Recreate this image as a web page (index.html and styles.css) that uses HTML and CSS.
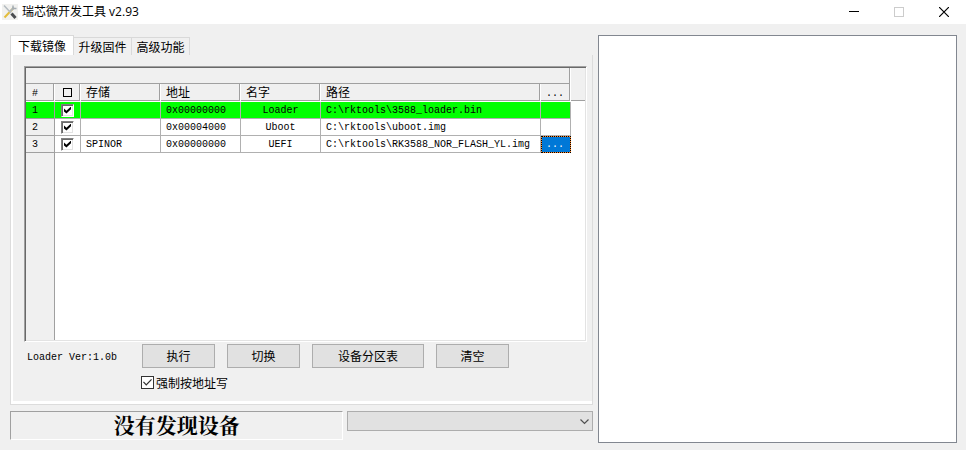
FILE: index.html
```html
<!DOCTYPE html>
<html lang="zh-CN">
<head>
    <meta charset="UTF-8">
    <meta name="viewport" content="width=device-width, initial-scale=1.0">
    <title>瑞芯微开发工具 v2.93</title>
    <link rel="stylesheet" href="styles.css">
</head>
<body>
    <header class="titlebar">
        <svg class="app-icon" width="16" height="16" viewBox="0 0 16 16">
            <rect width="16" height="16" fill="#f1f1ef"/>
            <path d="M2.5 13.500L11.500 4" stroke="#e3bd3c" stroke-width="2"/>
            <path d="M8 7.500L12 3.500" stroke="#aeb5ba" stroke-width="2"/>
            <path d="M11 1.500L11 4.500L14.500 4.500" fill="none" stroke="#a5adb3" stroke-width="1.500"/>
            <path d="M2 1.500L9 9" stroke="#b4bbc0" stroke-width="1.500"/>
            <path d="M9.500 9.500L13.500 14" stroke="#4b4d50" stroke-width="3"/>
        </svg>
        <h1>瑞芯微开发工具 v2.93</h1>
        <div class="window-buttons">
            <button type="button" aria-label="最小化"><svg width="10" height="10"><path d="M0 4.500H10" stroke="#000"/></svg></button>
            <button type="button" aria-label="最大化" disabled><svg width="10" height="10"><rect x="0.500" y="0.500" width="9" height="9" fill="none" stroke="#ccc"/></svg></button>
            <button type="button" aria-label="关闭"><svg width="10" height="10"><path d="M0 0L10 10M10 0L0 10" stroke="#000" stroke-width="1.200"/></svg></button>
        </div>
    </header>

    <main class="content">
        <section class="left">
            <div class="tabs" role="tablist">
                <button type="button" class="tab active" role="tab" aria-selected="true">下载镜像</button>
                <button type="button" class="tab" role="tab" aria-selected="false">升级固件</button>
                <button type="button" class="tab" role="tab" aria-selected="false">高级功能</button>
            </div>

            <div class="panel">
                <div class="grid-box">
                    <table class="grid">
                        <colgroup>
                            <col class="col-num">
                            <col class="col-check">
                            <col class="col-text">
                            <col class="col-text">
                            <col class="col-text">
                            <col class="col-path">
                            <col class="col-more">
                        </colgroup>
                        <thead>
                            <tr class="band"><th colspan="7"></th></tr>
                            <tr>
                                <th class="small">#</th>
                                <th class="center"><span class="square"></span></th>
                                <th>存储</th>
                                <th>地址</th>
                                <th>名字</th>
                                <th>路径</th>
                                <th class="small">...</th>
                            </tr>
                        </thead>
                        <tbody>
                            <tr class="done">
                                <td class="num">1</td>
                                <td class="center"><input type="checkbox" class="cell-check" aria-label="Loader" checked></td>
                                <td></td>
                                <td>0x00000000</td>
                                <td class="center">Loader</td>
                                <td>C:\rktools\3588_loader.bin</td>
                                <td></td>
                            </tr>
                            <tr>
                                <td class="num">2</td>
                                <td class="center"><input type="checkbox" class="cell-check" aria-label="Uboot" checked></td>
                                <td></td>
                                <td>0x00004000</td>
                                <td class="center">Uboot</td>
                                <td>C:\rktools\uboot.img</td>
                                <td></td>
                            </tr>
                            <tr>
                                <td class="num">3</td>
                                <td class="center"><input type="checkbox" class="cell-check" aria-label="UEFI" checked></td>
                                <td>SPINOR</td>
                                <td>0x00000000</td>
                                <td class="center">UEFI</td>
                                <td>C:\rktools\RK3588_NOR_FLASH_YL.img</td>
                                <td class="selected">...</td>
                            </tr>
                        </tbody>
                    </table>
                </div>

                <div class="actions">
                    <span class="version">Loader Ver:1.0b</span>
                    <button type="button" class="btn">执行</button>
                    <button type="button" class="btn">切换</button>
                    <button type="button" class="btn wide">设备分区表</button>
                    <button type="button" class="btn">清空</button>
                </div>
                <div class="option">
                    <input type="checkbox" id="force" class="check" checked>
                    <label for="force">强制按地址写</label>
                </div>
            </div>

            <div class="footer">
                <div class="status">没有发现设备</div>
                <div class="device">
                    <select aria-label="设备"><option></option></select>
                    <svg class="chevron" width="9" height="6" viewBox="0 0 9 6"><path d="M0.500 0.500L4.500 4.500L8.500 0.500" fill="none" stroke="#505050" stroke-width="1.200"/></svg>
                </div>
            </div>
        </section>

        <textarea class="log" aria-label="日志" readonly></textarea>
    </main>
</body>
</html>
```
FILE: styles.css
```css
* {
    margin: 0;
    padding: 0;
    box-sizing: border-box;
}

body {
    display: flex;
    flex-direction: column;
    height: 100vh;
    background: #f0f0f0;
    color: #000;
    font-family: "Liberation Mono", "Noto Sans CJK SC", monospace;
    font-size: 10px;
}

button {
    border: none;
    background: none;
    color: #000;
}

button,
label {
    font-family: "Noto Sans CJK SC", sans-serif;
    font-size: 12px;
    line-height: 16px;
}

/* title bar */
.titlebar {
    display: flex;
    align-items: center;
    height: 24px;
    padding-left: 2px;
    background: #fff;
}

.titlebar h1 {
    flex: 1;
    margin-left: 4px;
    font-family: "Open Sans", "Noto Sans CJK SC", sans-serif;
    font-size: 12px;
    font-weight: normal;
    line-height: 20px;
}

.window-buttons {
    display: flex;
}

.window-buttons button {
    display: flex;
    align-items: center;
    justify-content: center;
    width: 45px;
    height: 22px;
}

.content {
    flex: 1;
    min-height: 0;
    display: grid;
    grid-template-columns: 583fr 359fr;
    gap: 5px;
    padding: 11px 9px 7px 10px;
}

.left {
    display: flex;
    flex-direction: column;
    min-width: 0;
    padding-bottom: 3px;
}

/* tabs */
.tabs {
    display: flex;
    align-items: flex-end;
    height: 20px;
}

.tab {
    width: 58px;
    height: 18px;
    border: 1px solid #d9d9d9;
    border-width: 1px 1px 0 0;
    white-space: nowrap;
}

.tab.active {
    width: 64px;
    height: 20px;
    border-left-width: 1px;
    background: #fff;
}

.panel {
    flex: 1;
    display: flex;
    flex-direction: column;
    padding: 11px 5px 14px 11px;
    border: 1px solid #dcdcdc;
    border-top: none;
    box-shadow: inset 2px -3px #fff;
}

/* image list */
.grid-box {
    flex: 1;
    margin-left: 2px;
    border: 1px solid;
    border-color: #a0a0a0 #fff #fff #a0a0a0;
    box-shadow: inset 1px 1px #696969, inset -1px -1px #e3e3e3;
    padding: 1px;
    background:
        linear-gradient(#f0f0f0 32px, #a0a0a0 32px) top / 100% 33px content-box no-repeat,
        linear-gradient(90deg, #f0f0f0 28px, #a0a0a0 28px) left / 29px 100% content-box no-repeat,
        #fff;
}

.grid {
    width: 545px;
    table-layout: fixed;
    border-spacing: 0;
    line-height: 14px;
}

.col-num {
    width: 29px;
}

.col-check {
    width: 26px;
}

.col-text {
    width: 80px;
}

.col-path {
    width: 220px;
}

.col-more {
    width: 30px;
}

.grid th,
.grid td {
    padding: 2px 5px 0;
    text-align: left;
    white-space: nowrap;
}

.grid th {
    height: 18px;
    padding-top: 3px;
    border-right: 1px solid #fff;
    border-bottom: 1px solid #fff;
    background: #f0f0f0;
    box-shadow: inset -1px -1px #a0a0a0;
    font-weight: normal;
    font-size: 12px;
}

.grid .small {
    font-size: 10px;
}

.grid .band th {
    height: 16px;
    border-bottom: none;
}

.grid td {
    height: 17px;
    border-right: 1px solid #b0b0b0;
    border-bottom: 1px solid #b0b0b0;
    background: #fff;
}

.grid .num,
.grid th:first-child {
    padding-left: 6px;
}

.grid .num {
    border-color: #a0a0a0;
    background: #f0f0f0;
}

.grid .done td {
    background: #0f0;
}

.grid .center {
    padding-left: 0;
    padding-right: 0;
    text-align: center;
}

.grid th.center,
.grid td:has(.cell-check) {
    padding-top: 0;
}

.grid .selected {
    border-color: #ff8728;
    background: #0078d7;
    box-shadow: inset 1px 1px #ff8728;
    color: #fff;
    outline: 1px dotted #000;
    outline-offset: -1px;
}

.square {
    display: block;
    width: 9px;
    height: 9px;
    margin: 0 auto;
    border: 1px solid #000;
}

.cell-check,
.check {
    appearance: none;
    display: block;
    width: 13px;
    height: 13px;
    background: #fff;
}

.cell-check {
    margin: 0 auto;
    padding: 2px;
    border: 1px solid;
    border-color: #808080 #fff #fff #808080;
    box-shadow: inset 1px 1px #696969, inset -1px -1px #e3e3e3;
}

.cell-check:checked::before,
.check:checked::before {
    content: "";
    display: block;
    height: 100%;
    background: #000;
    clip-path: polygon(0 30%, 35% 60%, 100% 0, 100% 40%, 35% 100%, 0 70%);
}

.check {
    padding: 1px;
    border: 1px solid #333;
}

.check:checked::before {
    background: #333;
    clip-path: polygon(0 47%, 10% 38%, 36% 66%, 90% 10%, 100% 20%, 36% 85%);
}

/* buttons under the list */
.actions {
    display: flex;
    gap: 12px;
    margin-top: 2px;
}

.version {
    width: 108px;
    padding-left: 5px;
    line-height: 28px;
}

.btn {
    width: 73px;
    height: 24px;
    border: 1px solid #adadad;
    background: #e1e1e1;
}

.btn.wide {
    width: 112px;
}

.option {
    display: flex;
    align-items: center;
    gap: 2px;
    margin: 3px 0 0 119px;
}

.option label {
    line-height: 15px;
}

/* bottom row */
.footer {
    display: flex;
    align-items: flex-start;
    gap: 4px;
    margin-top: 6px;
}

.status {
    flex: 333 0 0;
    height: 29px;
    border: 1px solid;
    border-color: #a0a0a0 #fff #fff #a0a0a0;
    font-family: "Noto Serif CJK SC", "Noto Sans CJK SC", serif;
    font-size: 21px;
    font-weight: bold;
    line-height: 24px;
    text-align: center;
}

.device {
    flex: 247 0 0;
    position: relative;
}

.device select {
    appearance: none;
    display: block;
    width: 100%;
    height: 20px;
    border: 1px solid #adadad;
    border-radius: 0;
    background: #e1e1e1;
}

.chevron {
    position: absolute;
    top: 8px;
    right: 4px;
    pointer-events: none;
}

.log {
    border: 1px solid #828790;
    border-radius: 0;
    background: #fff;
    resize: none;
    outline: none;
}
```
